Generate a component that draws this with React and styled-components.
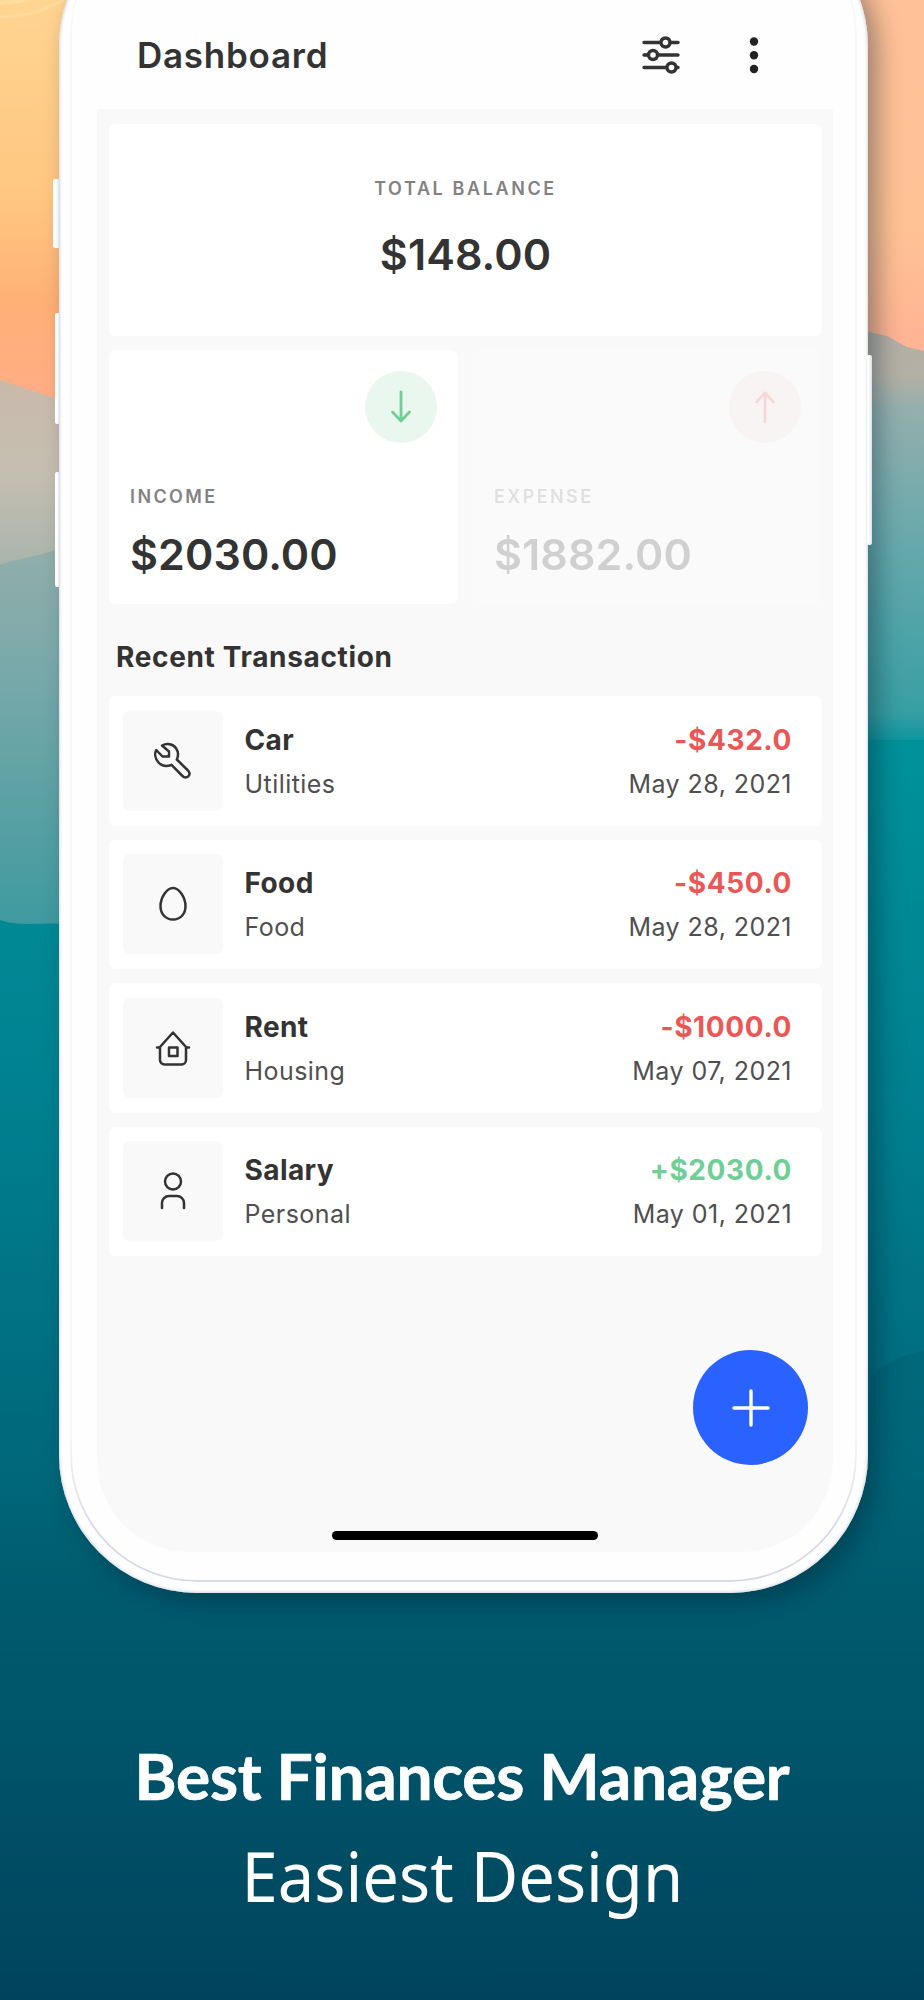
import React from 'react';
import styled, { createGlobalStyle } from 'styled-components';

const GlobalStyle = createGlobalStyle`
  * {
    box-sizing: border-box;
  }

  body {
    margin: 0;
    font-family: Inter, 'Liberation Sans', sans-serif;
    color: #333333;
  }
`;

const Poster = styled.main`
  position: relative;
  width: 924px;
  height: 2000px;
  overflow: hidden;
  display: flex;
  flex-direction: column;
  align-items: center;
`;

const Scenery = styled.svg`
  position: absolute;
  inset: 0;
  z-index: -1;
`;

const Phone = styled.section`
  position: relative;
  flex: none;
  width: 809px;
  height: 1685px;
  margin-top: -92px;
  margin-left: 3px;
  padding: 92px 35px 41px 38px;
  border-radius: 138px;
  background: #fefefe;
  box-shadow: inset 0 0 3px 1px #d5d9e2, 10px 10px 24px rgba(0, 30, 45, 0.38);
`;

const Bezel = styled.div`
  position: absolute;
  inset: 0 11px 11px 11px;
  border: 2px solid #d6dae3;
  border-radius: 127px;
  mask-image: linear-gradient(rgba(0, 0, 0, 0.15) 91%, #000000 97%);
`;

const SideButton = styled.span`
  position: absolute;
  top: ${(props) => props.$top}px;
  ${(props) => (props.$right ? 'right' : 'left')}: -${(props) => props.$reach}px;
  width: ${(props) => props.$reach + 1}px;
  height: ${(props) => props.$length}px;
  border-radius: 2px;
  background: linear-gradient(90deg, #ffffff 40%, #d9dde5);
`;

const Screen = styled.div`
  position: relative;
  height: 1552px;
  border-radius: 0 0 92px 92px;
  background: #f9f9f9;
  overflow: hidden;
`;

const Header = styled.header`
  display: flex;
  align-items: center;
  height: 109px;
  padding: 0 74px 0 40px;
  background: #fefefe;
`;

const HeaderTitle = styled.h1`
  flex: 1;
  margin: 0;
  font-size: 35px;
  font-weight: 600;
  letter-spacing: 0.75px;
`;

const HeaderIcons = styled.div`
  display: flex;
  align-items: center;
  gap: 69px;
`;

const Content = styled.div`
  display: flex;
  flex-direction: column;
  gap: 14px;
  padding: 14.5px 11px 0 12px;
`;

const Card = styled.div`
  border-radius: 7px;
  background: #ffffff;
`;

const Label = styled.div`
  font-size: 18px;
  line-height: 22px;
  font-weight: 600;
  letter-spacing: 2.4px;
  color: #828282;
`;

const Amount = styled.div`
  margin-top: 20px;
  font-size: 43px;
  line-height: 52px;
  font-weight: 600;
  letter-spacing: 0.1px;
`;

const BalanceCard = styled(Card)`
  display: flex;
  flex-direction: column;
  align-items: center;
  height: 212px;
  padding-top: 54px;

  ${Label} {
    letter-spacing: 2.6px;
  }

  ${Amount} {
    margin-top: 28px;
  }
`;

const Summary = styled.div`
  display: grid;
  grid-template-columns: 1fr 1fr;
  gap: 15px;
`;

const SummaryCard = styled(Card)`
  display: flex;
  flex-direction: column;
  height: 254.5px;
  padding: 21px 21px 0 21px;
  opacity: ${(props) => (props.$faded ? 0.2 : 1)};
`;

const Direction = styled.div`
  display: flex;
  align-items: center;
  justify-content: center;
  align-self: flex-end;
  width: 72px;
  height: 72px;
  margin-bottom: 43px;
  border-radius: 50%;
  color: ${(props) => props.$color};
  background: ${(props) => props.$tint};
`;

const SectionTitle = styled.h2`
  margin: 22px 0 8px 7px;
  font-size: 28px;
  line-height: 34px;
  font-weight: 700;
  letter-spacing: 0.65px;
`;

const Transaction = styled(Card)`
  display: flex;
  align-items: center;
  height: 129.5px;
  padding: 0 30px 0 14px;
`;

const IconTile = styled.div`
  display: flex;
  align-items: center;
  justify-content: center;
  width: 100px;
  height: 100px;
  margin-right: 21.5px;
  border-radius: 7px;
  background: #f9f9f9;
`;

const Details = styled.div`
  display: flex;
  flex-direction: column;
  gap: 12px;
  align-items: ${(props) => (props.$end ? 'flex-end' : 'flex-start')};
  margin-left: ${(props) => (props.$end ? 'auto' : 0)};
`;

const Name = styled.div`
  font-size: 28px;
  line-height: 34px;
  font-weight: 700;
  letter-spacing: 0.4px;
`;

const Value = styled(Name)`
  letter-spacing: 0.6px;
  color: ${(props) => (props.$income ? '#6fcf97' : '#eb5757')};
`;

const Meta = styled.div`
  font-size: 25px;
  line-height: 30px;
  letter-spacing: 0.45px;
  color: #4f4f4f;
`;

const AddButton = styled.button`
  position: absolute;
  right: 25px;
  bottom: 87px;
  display: flex;
  align-items: center;
  justify-content: center;
  width: 115px;
  height: 115px;
  padding: 0;
  border: 0;
  border-radius: 50%;
  background: #2962ff;
`;

const HomeBar = styled.div`
  position: absolute;
  left: 235px;
  bottom: 12px;
  width: 266px;
  height: 9px;
  border-radius: 5px;
  background: #000000;
`;

const Tagline = styled.p`
  margin: 147px 0 0;
  font-family: Lato, sans-serif;
  font-size: 64px;
  line-height: 72px;
  font-weight: 700;
  letter-spacing: -0.27px;
  color: #ffffff;
  -webkit-text-stroke: 0.7px #ffffff;
`;

const Subline = styled.p`
  margin: 23px 0 0;
  font-family: 'Noto Sans', sans-serif;
  font-size: 70px;
  line-height: 80px;
  color: #ffffff;
  transform: scaleX(0.93);
`;

const stroke = {
  fill: 'none',
  stroke: 'currentColor',
  strokeLinecap: 'round',
  strokeLinejoin: 'round',
};

const SlidersIcon = () => (
  <svg width="38" height="38" viewBox="0 0 38 38" strokeWidth="3.4" {...stroke}>
    <path d="M2 6.500h16M28 6.500h8M2 19h4M16 19h20M2 31.500h22M35 31.500h1" />
    <circle cx="23.500" cy="6.500" r="4.500" />
    <circle cx="11" cy="19" r="4.500" />
    <circle cx="29.500" cy="31.500" r="4.500" />
  </svg>
);

const MoreIcon = () => (
  <svg width="10" height="38" viewBox="0 0 10 38" fill="#222222">
    <circle cx="5" cy="5.500" r="4.200" />
    <circle cx="5" cy="19.300" r="4.200" />
    <circle cx="5" cy="33" r="4.200" />
  </svg>
);

const ArrowIcon = ({ up }) => (
  <svg width="24" height="34" viewBox="0 0 24 34" strokeWidth="2.8" {...stroke}>
    <path d={up ? 'M12 32V3M3.500 12L12 3l8.500 9' : 'M12 2v29M3.500 22l8.500 9 8.500-9'} />
  </svg>
);

const icons = {
  wrench: <path d="M8 3.500c5-2.500 11-1.700 14 2.700 2.600 3.700 2.500 7.700.8 11.300l11.200 11c4 4.500-1.500 9.500-5.500 5.500l-11-11.200c-5 2-10 .9-13-2.300-3.600-3.800-4-9-2.300-12.500L8.500 14.500H15V9.500z" />,
  egg: <path d="M19 3c6.500 0 12.500 10 12.500 18 0 8-5 13.500-12.500 13.500S6.500 29 6.500 21C6.500 13 12.500 3 19 3z" />,
  house: <path d="M6 18v13a4.500 4.500 0 0 0 4.500 4.500h17A4.500 4.500 0 0 0 32 31V18M3 18.500h2.500L19 3.500l13.500 15H35M15 18.500h8.500v8.500H15z" />,
  person: <path d="M27 9.500a8 8 0 1 1-16 0 8 8 0 0 1 16 0M8 36v-5a7 7 0 0 1 7-7h8a7 7 0 0 1 7 7v5" />,
};

const transactions = [
  { icon: 'wrench', name: 'Car', category: 'Utilities', value: '-$432.0', date: 'May 28, 2021' },
  { icon: 'egg', name: 'Food', category: 'Food', value: '-$450.0', date: 'May 28, 2021' },
  { icon: 'house', name: 'Rent', category: 'Housing', value: '-$1000.0', date: 'May 07, 2021' },
  { icon: 'person', name: 'Salary', category: 'Personal', value: '+$2030.0', date: 'May 01, 2021', income: true },
];

const Background = () => (
  <Scenery width="924" height="2000" viewBox="0 0 924 2000">
    <defs>
      <linearGradient id="sky" x1="0" y1="0" x2="0" y2="400" gradientUnits="userSpaceOnUse">
        <stop offset="0" stopColor="#ffd591" />
        <stop offset="0.5" stopColor="#ffc681" />
        <stop offset="0.76" stopColor="#ffb075" />
        <stop offset="1" stopColor="#ffac86" />
      </linearGradient>
      <linearGradient id="eastSky" x1="0" y1="0" x2="0" y2="350" gradientUnits="userSpaceOnUse">
        <stop offset="0" stopColor="#ffc198" />
        <stop offset="0.65" stopColor="#ffc294" />
        <stop offset="1" stopColor="#ffb393" />
      </linearGradient>
      <linearGradient id="ridge" x1="0" y1="380" x2="0" y2="600" gradientUnits="userSpaceOnUse">
        <stop offset="0" stopColor="#c9b9ab" />
        <stop offset="0.4" stopColor="#c6bfb1" />
        <stop offset="1" stopColor="#9fb1ab" />
      </linearGradient>
      <linearGradient id="hills" x1="0" y1="540" x2="0" y2="925" gradientUnits="userSpaceOnUse">
        <stop offset="0" stopColor="#94aeaa" />
        <stop offset="0.35" stopColor="#78a9aa" />
        <stop offset="1" stopColor="#3f9a9f" />
      </linearGradient>
      <linearGradient id="eastHills" x1="0" y1="330" x2="0" y2="750" gradientUnits="userSpaceOnUse">
        <stop offset="0" stopColor="#b5afa5" />
        <stop offset="0.11" stopColor="#b3b0a6" />
        <stop offset="0.19" stopColor="#93afad" />
        <stop offset="0.5" stopColor="#68a9ac" />
        <stop offset="0.91" stopColor="#389fa4" />
        <stop offset="1" stopColor="#00939b" />
      </linearGradient>
      <linearGradient id="sea" x1="0" y1="720" x2="0" y2="2000" gradientUnits="userSpaceOnUse">
        <stop offset="0" stopColor="#00939b" />
        <stop offset="0.3" stopColor="#008090" />
        <stop offset="0.6" stopColor="#006679" />
        <stop offset="0.68" stopColor="#005b6f" />
        <stop offset="0.8" stopColor="#00546a" />
        <stop offset="1" stopColor="#00445c" />
      </linearGradient>
      <linearGradient id="headland" x1="0" y1="1350" x2="0" y2="1600" gradientUnits="userSpaceOnUse">
        <stop offset="0" stopColor="#005a6d" stopOpacity="0.35" />
        <stop offset="1" stopColor="#005a6d" stopOpacity="0" />
      </linearGradient>
    </defs>
    <rect width="462" height="420" fill="url(#sky)" />
    <rect x="462" width="462" height="420" fill="url(#eastSky)" />
    <path d="M0 17c30-1 44-7 64-17" fill="none" stroke="#ffe7ad" strokeWidth="3" opacity="0.4" />
    <path d="M0 3c12-1 18-1 28-4" fill="none" stroke="#ffe7ad" strokeWidth="4" opacity="0.5" />
    <path d="M0 380l60 20h402v600H0z" fill="url(#ridge)" />
    <path d="M0 565c20-8 40-8 60-17h402v452H0z" fill="url(#hills)" />
    <path d="M462 332h407l18 4 20 11 17 4v649H462z" fill="url(#eastHills)" />
    <path d="M0 920c20 7 40 2 60 4h402V740h462v1260H0z" fill="url(#sea)" />
    <path d="M700 1390l169-14c15-10 30-22 55-25v249H700z" fill="url(#headland)" />
  </Scenery>
);

const App = () => {
  return (
    <Poster>
      <GlobalStyle />
      <Background />
      <Phone>
        <SideButton $top={271} $length={69} $reach={6} />
        <SideButton $top={405} $length={111} $reach={4} />
        <SideButton $top={564} $length={115} $reach={4} />
        <SideButton $right $top={447} $length={190} $reach={4} />
        <Bezel />
        <Screen>
          <Header>
            <HeaderTitle>Dashboard</HeaderTitle>
            <HeaderIcons>
              <SlidersIcon />
              <MoreIcon />
            </HeaderIcons>
          </Header>
          <Content>
            <BalanceCard>
              <Label>TOTAL BALANCE</Label>
              <Amount>$148.00</Amount>
            </BalanceCard>
            <Summary>
              <SummaryCard>
                <Direction $color="#6fcf97" $tint="#e9f7ef">
                  <ArrowIcon />
                </Direction>
                <Label>INCOME</Label>
                <Amount>$2030.00</Amount>
              </SummaryCard>
              <SummaryCard $faded>
                <Direction $color="#eb5757" $tint="#fde2e2">
                  <ArrowIcon up />
                </Direction>
                <Label>EXPENSE</Label>
                <Amount>$1882.00</Amount>
              </SummaryCard>
            </Summary>
            <SectionTitle>Recent Transaction</SectionTitle>
            {transactions.map((item) => (
              <Transaction key={item.name}>
                <IconTile>
                  <svg width="38" height="38" viewBox="0 0 38 38" strokeWidth="2.5" {...stroke}>
                    {icons[item.icon]}
                  </svg>
                </IconTile>
                <Details>
                  <Name>{item.name}</Name>
                  <Meta>{item.category}</Meta>
                </Details>
                <Details $end>
                  <Value $income={item.income}>{item.value}</Value>
                  <Meta>{item.date}</Meta>
                </Details>
              </Transaction>
            ))}
          </Content>
          <AddButton aria-label="Add transaction">
            <svg width="38" height="38" viewBox="0 0 38 38" stroke="#ffffff" strokeWidth="3.4" strokeLinecap="round">
              <path d="M19 2v34M2 19h34" />
            </svg>
          </AddButton>
          <HomeBar />
        </Screen>
      </Phone>
      <Tagline>Best Finances Manager</Tagline>
      <Subline>Easiest Design</Subline>
    </Poster>
  );
};

export default App;
